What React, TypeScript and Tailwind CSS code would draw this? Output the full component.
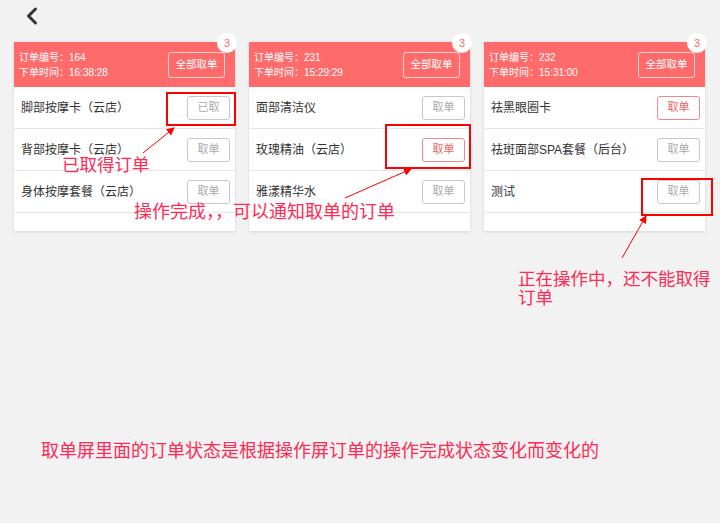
import { ChevronLeft } from 'lucide-react';

type Item = { name: string; state: 'done' | 'ready' | 'idle' };
type Order = { no: string; time: string; items: Item[] };

const orders: Order[] = [
  {
    no: '164',
    time: '16:38:28',
    items: [
      { name: '脚部按摩卡（云店）', state: 'done' },
      { name: '背部按摩卡（云店）', state: 'idle' },
      { name: '身体按摩套餐（云店）', state: 'idle' },
    ],
  },
  {
    no: '231',
    time: '15:29:29',
    items: [
      { name: '面部清洁仪', state: 'idle' },
      { name: '玫瑰精油（云店）', state: 'ready' },
      { name: '雅漾精华水', state: 'idle' },
    ],
  },
  {
    no: '232',
    time: '15:31:00',
    items: [
      { name: '祛黑眼圈卡', state: 'ready' },
      { name: '祛斑面部SPA套餐（后台）', state: 'idle' },
      { name: '测试', state: 'idle' },
    ],
  },
];

const sans = { fontFamily: '"Liberation Sans", "Noto Sans CJK SC", sans-serif' };
const note = { fontFamily: '"Liberation Serif", "Noto Sans CJK SC", serif', fontFeatureSettings: '"halt" 0' };

function OrderCard({ order }: { order: Order }) {
  return (
    <div className="relative w-[221px] bg-white shadow-[0_1px_3px_rgba(0,0,0,0.12)]">
      <div className="flex h-[45px] items-center justify-between bg-[#ff6b6b] pl-[5px] pr-[10px] text-white">
        <div className="flex flex-col text-[10px] leading-[15px]">
          <span>订单编号：{order.no}</span>
          <span>下单时间：{order.time}</span>
        </div>
        <button className="flex h-[26px] w-[57px] items-center justify-center rounded-[3px] border border-white/70 text-[10.5px]">
          全部取单
        </button>
      </div>
      <span className="absolute right-[-2px] top-[-9px] flex h-[20px] w-[20px] items-center justify-center rounded-full bg-white text-[11px] text-[#ff6b6b]">
        3
      </span>
      {order.items.map((item) => (
        <div
          key={item.name}
          className="flex h-[42px] items-center justify-between border-b border-[#e6e6e6] pl-[7px] pr-[5px]"
        >
          <span className="text-[12px] text-[#333]">{item.name}</span>
          <span
            className={
              item.state === 'ready'
                ? 'flex h-[24px] w-[43px] items-center justify-center rounded-[3px] border border-[#f08a8a] text-[11px] text-[#f06464]'
                : 'flex h-[24px] w-[43px] items-center justify-center rounded-[3px] border border-[#c8c8c8] text-[11px] text-[#aaa]'
            }
          >
            {item.state === 'done' ? '已取' : '取单'}
          </span>
        </div>
      ))}
      <div className="h-[18px]" />
    </div>
  );
}

export default function App() {
  return (
    <div className="relative h-[523px] w-[720px] overflow-hidden bg-[#f2f2f2]" style={sans}>
      <div className="flex h-[42px] items-start pl-[18px] pt-[2px]">
        <ChevronLeft size={28} strokeWidth={2.6} className="text-[#333]" />
      </div>
      <div className="flex gap-[14px] px-[14px]">
        {orders.map((o) => (
          <OrderCard key={o.no} order={o} />
        ))}
      </div>

      {/* annotations drawn over the screen */}
      <div className="pointer-events-none absolute inset-0" style={note}>
        <div className="absolute left-[166px] top-[92px] h-[34px] w-[70px] border-2 border-[#f00]" />
        <div className="absolute left-[385px] top-[124px] h-[45px] w-[86px] border-2 border-[#f00]" />
        <div className="absolute left-[641px] top-[178px] h-[38px] w-[72px] border-2 border-[#f00]" />
        <svg className="absolute inset-0" width="720" height="523">
          <defs>
            <marker id="ah" markerWidth="8" markerHeight="8" refX="7" refY="4" orient="auto">
              <path d="M0,0 L8,4 L0,8 z" fill="#f00" />
            </marker>
          </defs>
          <line x1="143" y1="153" x2="174" y2="128" stroke="#f00" strokeWidth="1" markerEnd="url(#ah)" />
          <line x1="345" y1="198" x2="411" y2="169" stroke="#f00" strokeWidth="1" markerEnd="url(#ah)" />
          <line x1="622" y1="258" x2="646" y2="216" stroke="#f00" strokeWidth="1" markerEnd="url(#ah)" />
        </svg>
        <span className="absolute left-[62px] top-[155px] text-[17.5px] leading-[20px] text-[#ff2a55]">已取得订单</span>
        <span className="absolute left-[134px] top-[202px] text-[18px] leading-[20px] text-[#ff2a55]">操作完成，，可以通知取单的订单</span>
        <span className="absolute left-[518px] top-[270px] w-[200px] text-[17.5px] leading-[19px] text-[#ff2a55]">正在操作中，还不能取得订单</span>
        <span className="absolute left-[41px] top-[441px] text-[18px] leading-[20px] text-[#ff2a55]">取单屏里面的订单状态是根据操作屏订单的操作完成状态变化而变化的</span>
      </div>
    </div>
  );
}
